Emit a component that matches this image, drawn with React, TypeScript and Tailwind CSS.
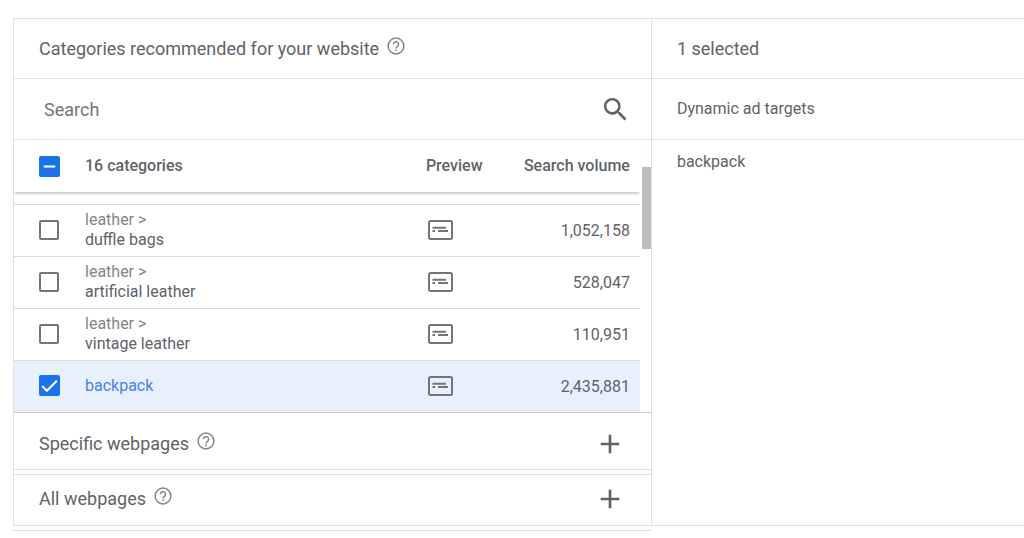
import { useEffect, useRef, useState } from "react";
import { MdAdd, MdSearch } from "react-icons/md";

type Category = {
    parent?: string;
    name: string;
    volume: string;
};

const categories: Category[] = [
    { parent: "leather", name: "duffle bags", volume: "1,052,158" },
    { parent: "leather", name: "artificial leather", volume: "528,047" },
    { parent: "leather", name: "vintage leather", volume: "110,951" },
    { name: "backpack", volume: "2,435,881" },
];

function HelpButton({ topic }: { topic: string }) {
    return (
        <button type="button" aria-label={`Help: ${topic}`} className="mb-1.5 text-[#80868b]">
            <svg viewBox="0 0 18 18" className="size-[18px]" fill="none" stroke="currentColor">
                <circle cx="9" cy="9" r="7.9" strokeWidth="1.5" />
                <path d="M6.4 7.2a2.6 2.6 0 1 1 4.3 2c-.9.8-1.7 1.1-1.7 2.3" strokeWidth="1.5" />
                <path d="M9 12.4v1.6" strokeWidth="1.6" />
            </svg>
        </button>
    );
}

function PreviewIcon() {
    return (
        <svg viewBox="0 0 25 20" className="h-5 w-[25px]" fill="none">
            <rect x="1" y="1" width="23" height="18" rx="1.5" stroke="currentColor" strokeWidth="2" />
            <path d="M4.5 7.7h13.5M4.5 11h2.5M10 11h10" stroke="currentColor" strokeWidth="2" />
        </svg>
    );
}

type CheckboxProps = {
    label: string;
    checked: boolean;
    indeterminate?: boolean;
    onChange: () => void;
};

function Checkbox({ label, checked, indeterminate = false, onChange }: CheckboxProps) {
    const ref = useRef<HTMLInputElement>(null);

    useEffect(() => {
        if (ref.current) ref.current.indeterminate = indeterminate;
    }, [indeterminate]);

    return (
        <span className="relative block w-fit">
            <input
                ref={ref}
                type="checkbox"
                aria-label={label}
                checked={checked}
                onChange={onChange}
                className="block size-5 appearance-none rounded-xs border-2 border-[#757575] bg-white checked:size-[21px] checked:border-[#1a73e8] checked:bg-[#1a73e8] indeterminate:size-[21px] indeterminate:border-[#1a73e8] indeterminate:bg-[#1a73e8]"
            />
            {(checked || indeterminate) && (
                <svg
                    viewBox="0 0 20 20"
                    className="pointer-events-none absolute inset-0 size-full"
                    fill="none"
                    stroke="white"
                    strokeWidth="2"
                >
                    <path d={indeterminate ? "M4.5 10h11" : "M3 10.5l4.5 4.5L17 5.5"} />
                </svg>
            )}
        </span>
    );
}

function ExpandRow({ title }: { title: string }) {
    return (
        <div className="flex h-7 items-center justify-between pr-[25px] pl-[25px]">
            <div className="flex items-center gap-2">
                <h2 className="text-lg">{title}</h2>
                <HelpButton topic={title} />
            </div>
            <button type="button" aria-label={`Add ${title}`} className="text-[#5f6368]">
                <MdAdd className="size-8" />
            </button>
        </div>
    );
}

export default function App() {
    const [selected, setSelected] = useState<string[]>(["backpack"]);

    const toggle = (name: string) =>
        setSelected((current) =>
            current.includes(name) ? current.filter((item) => item !== name) : [...current, name],
        );

    const allSelected = selected.length === categories.length;

    return (
        <main className="bg-white pt-[18px] pl-[13px] font-['Roboto',sans-serif] text-base text-[#5f6368]">
            <div className="grid grid-cols-[12fr_7fr] border-t border-b border-l border-[#e0e0e0]">
                <section className="border-r border-[#e0e0e0]">
                    <div className="flex h-[60px] items-center gap-2 border-b border-[#e0e0e0] pl-[25px]">
                        <h2 className="text-lg">Categories recommended for your website</h2>
                        <HelpButton topic="Categories recommended for your website" />
                    </div>

                    <div className="flex h-[61px] items-center border-b border-[#e0e0e0] pr-5 pl-[30px]">
                        <input
                            type="text"
                            aria-label="Search categories"
                            placeholder="Search"
                            className="min-w-0 flex-1 pt-0.5 text-lg outline-none placeholder:text-[#757575]"
                        />
                        <button type="button" aria-label="Search" className="text-[#5f6368]">
                            <MdSearch className="size-[31px]" />
                        </button>
                    </div>

                    <div className="flex border-b border-[#c8cacd]">
                        <table className="min-w-0 flex-1 table-fixed border-separate border-spacing-0">
                            <thead>
                                <tr className="h-[52px] text-left shadow-[0_3px_2px_-1px_rgba(0,0,0,0.2)]">
                                    <th className="w-[71px] pl-[25px]">
                                        <Checkbox
                                            label="Select all categories"
                                            checked={allSelected}
                                            indeterminate={selected.length > 0 && !allSelected}
                                            onChange={() =>
                                                setSelected(allSelected ? [] : categories.map((c) => c.name))
                                            }
                                        />
                                    </th>
                                    <th className="font-medium">16 categories</th>
                                    <th className="w-[90px] font-medium">Preview</th>
                                    <th className="w-[124px] pr-2.5 text-right font-medium">Search volume</th>
                                </tr>
                            </thead>
                            <tbody>
                                <tr className="h-3" aria-hidden="true">
                                    <td colSpan={4} />
                                </tr>
                                {categories.map(({ parent, name, volume }) => {
                                    const active = selected.includes(name);
                                    return (
                                        <tr
                                            key={name}
                                            className={`h-[52px] *:border-t *:border-[#dadce0] ${active ? "bg-[#e8f0fe]" : ""}`}
                                        >
                                            <td className="pb-0.5 pl-[25px]">
                                                <Checkbox
                                                    label={name}
                                                    checked={active}
                                                    onChange={() => toggle(name)}
                                                />
                                            </td>
                                            <td className={`pb-0.5 leading-5 ${active ? "text-[#4a80e8]" : ""}`}>
                                                {parent && (
                                                    <span className="block text-[#80868b]">{parent} &gt;</span>
                                                )}
                                                {name}
                                            </td>
                                            <td className="pb-0.5 pl-0.5">
                                                <button
                                                    type="button"
                                                    aria-label={`Preview ${name}`}
                                                    className="block text-[#757575]"
                                                >
                                                    <PreviewIcon />
                                                </button>
                                            </td>
                                            <td className="pr-2.5 text-right">{volume}</td>
                                        </tr>
                                    );
                                })}
                            </tbody>
                        </table>
                        <div className="w-[11px] pt-[27px] pl-0.5">
                            <div className="h-[82px] bg-[#bdbdbd]" />
                        </div>
                    </div>

                    <div className="border-b border-[#e0e0e0] pt-[17px] pb-[11px]">
                        <ExpandRow title="Specific webpages" />
                    </div>
                    <div className="mt-1 border-t border-[#e0e0e0] pt-2.5 pb-3">
                        <ExpandRow title="All webpages" />
                    </div>
                </section>

                <section>
                    <div className="flex h-[60px] items-center border-b border-[#e0e0e0] pl-[25px]">
                        <h2 className="text-lg">{selected.length} selected</h2>
                    </div>
                    <div className="flex h-[61px] items-center border-b border-[#e0e0e0] pl-[25px]">
                        <h3>Dynamic ad targets</h3>
                    </div>
                    <ul className="pt-2.5 pl-[25px]">
                        {selected.map((name) => (
                            <li key={name}>{name}</li>
                        ))}
                    </ul>
                </section>
            </div>
            <div className="mt-1 grid grid-cols-[12fr_7fr]">
                <div className="border-t border-[#e0e0e0]" />
            </div>
        </main>
    );
}
